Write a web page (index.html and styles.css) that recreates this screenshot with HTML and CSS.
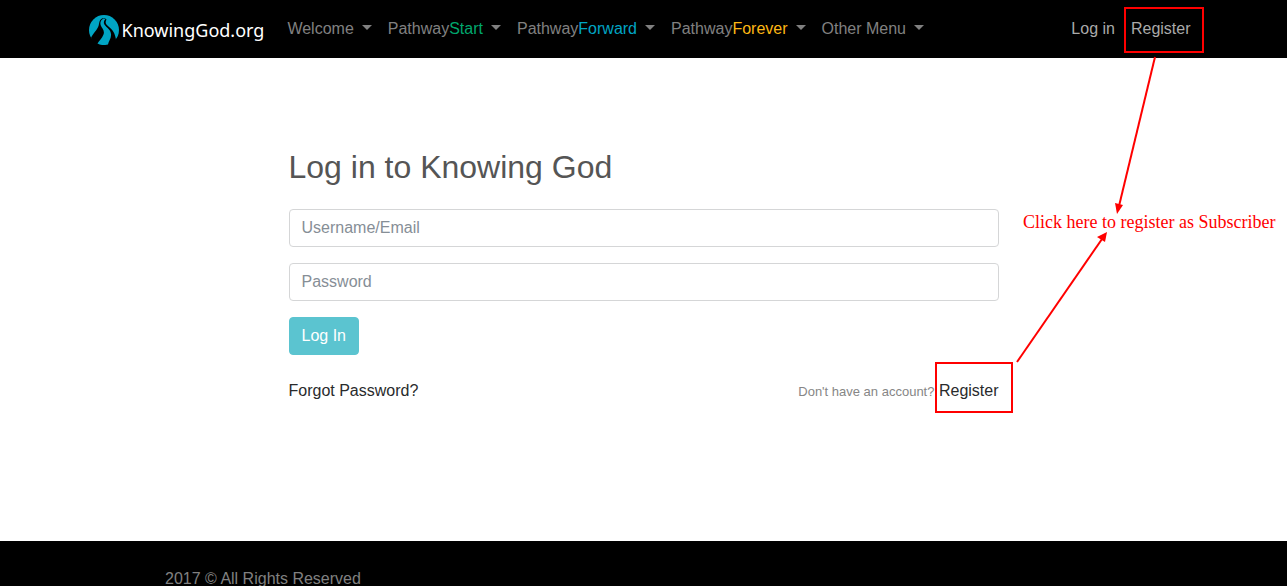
FILE: index.html
```html
<!DOCTYPE html>
<html lang="en">
<head>
  <meta charset="utf-8">
  <meta name="viewport" content="width=device-width, initial-scale=1">
  <title>Log in to Knowing God</title>
  <link rel="stylesheet" href="styles.css">
</head>
<body>
  <header class="site-header">
    <nav class="navbar">
      <a class="brand" href="#">
        <svg class="brand-mark" viewBox="0 0 30 30" aria-hidden="true">
          <circle cx="15" cy="15" r="15" fill="#00a5c4"/>
          <path d="M13 3.500 C10 5 10.500 8 9.500 11 C8 15.500 4 18 2 23 C4 27 7 29 9 30 L20 30 C23 29 25.500 27 27 24.500 C26 18 23.500 14.500 19.500 11.500 C16.500 9 16 7.500 17.500 4.500 C16.500 3.500 15 3 13 3.500 Z" fill="#000"/>
          <path d="M14.500 3.500 C11.500 5 10.800 8 11.800 10.500 C13 13.500 16 15.500 14.500 19.500 C13 23.500 10 25.500 8.500 28.500 C11.500 30.500 16 30.300 19 29.500 C19.500 26 22.500 23.500 22 19 C21.500 13.500 16 12 15 8.500 C14.500 6.500 15.500 5 16.500 4 Z" fill="#00a5c4"/>
        </svg>
        <span class="brand-name">KnowingGod.org</span>
      </a>
      <ul class="menu">
        <li><a class="menu-link has-caret" href="#">Welcome</a></li>
        <li><a class="menu-link has-caret" href="#"><span>Pathway<span class="start">Start</span></span></a></li>
        <li><a class="menu-link has-caret" href="#"><span>Pathway<span class="forward">Forward</span></span></a></li>
        <li><a class="menu-link has-caret" href="#"><span>Pathway<span class="forever">Forever</span></span></a></li>
        <li><a class="menu-link has-caret" href="#">Other Menu</a></li>
      </ul>
      <ul class="menu account">
        <li><a class="menu-link" href="#">Log in</a></li>
        <li><a class="menu-link" href="#">Register</a></li>
      </ul>
    </nav>
  </header>

  <main class="login">
    <h1 class="login-title">Log in to Knowing God</h1>
    <form class="login-form">
      <input class="field" type="text" placeholder="Username/Email" aria-label="Username/Email">
      <input class="field" type="password" placeholder="Password" aria-label="Password">
      <button class="submit" type="submit">Log In</button>
    </form>
    <div class="login-links">
      <a href="#">Forgot Password?</a>
      <p class="signup"><small>Don't have an account?</small> <a href="#">Register</a></p>
    </div>
  </main>

  <footer class="site-footer">
    <p class="copyright">2017 © All Rights Reserved</p>
  </footer>

  <svg class="callouts" width="1287" height="420" viewBox="0 0 1287 420">
    <g fill="none" stroke="#f00" stroke-width="2">
      <rect x="1125" y="8" width="78" height="44"/>
      <rect x="936" y="363" width="76" height="49"/>
      <path d="M1155 57 L1119 206"/>
      <path d="M1017 362 L1102 239"/>
    </g>
    <g fill="#f00">
      <path d="M1117 214 L1115 203 L1123 205 Z"/>
      <path d="M1107 232 L1097 237 L1105 242 Z"/>
    </g>
    <text class="callout-text" x="1023" y="228">Click here to register as Subscriber</text>
  </svg>
</body>
</html>
```
FILE: styles.css
```css
*,
*::before,
*::after {
  box-sizing: border-box;
}

html {
  scrollbar-width: none;
}

body {
  position: relative;
  margin: 0;
  background: #fff;
  color: #555;
  font: 16px/24px "Liberation Sans", Arial, sans-serif;
  overflow-x: hidden;
}

a {
  color: #292b2c;
  text-decoration: none;
}

.site-header {
  background: #000;
}

.navbar {
  display: flex;
  align-items: center;
  max-width: 1140px;
  min-height: 58px;
  margin: 0 auto;
  padding: 0 15px;
}

.brand {
  display: flex;
  align-items: center;
  gap: 3px;
  margin-right: 15px;
  padding-top: 2px;
}

.brand-mark {
  width: 30px;
  height: 30px;
}

.brand-name {
  color: #fff;
  font: 18px/30px "Noto Sans", "Open Sans", sans-serif;
}

.menu {
  display: flex;
  margin: 0;
  padding: 0;
  list-style: none;
}

.account {
  margin-left: auto;
}

.menu-link {
  display: flex;
  align-items: center;
  gap: 8px;
  padding: 8px;
  color: #808080;
}

.account .menu-link {
  color: #aaa;
}

.has-caret::after {
  content: "";
  margin-bottom: 3px;
  border: 5px solid transparent;
  border-top-color: currentColor;
  border-bottom: 0;
}

.start {
  color: #00a76d;
}

.forward {
  color: #00a5c4;
}

.forever {
  color: #fdb714;
}

.login {
  max-width: 740px;
  margin: 0 auto;
  padding: 91px 15px 137px;
}

.login-title {
  margin: 0 0 24px;
  font-size: 32px;
  font-weight: 400;
  line-height: 36px;
}

.login-form {
  display: flex;
  flex-direction: column;
  align-items: flex-start;
  gap: 16px;
}

.field {
  width: 100%;
  height: 38px;
  padding: 6px 12px;
  border: 1px solid #d5d6d7;
  border-radius: 4px;
  background: #fff;
  color: #464a4c;
  font: inherit;
}

.field::placeholder {
  color: #868e96;
  opacity: 1;
}

.submit {
  height: 38px;
  padding: 6px 12px;
  border: 1px solid #5bc4d0;
  border-radius: 4px;
  background: #5bc4d0;
  color: #fff;
  font: inherit;
}

.login-links {
  display: flex;
  justify-content: space-between;
  margin-top: 24px;
}

.signup {
  margin: 0;
}

.signup small {
  color: #868686;
  font-size: 13px;
}

.site-footer {
  padding: 26px 15px 0;
  background: #000;
}

.copyright {
  max-width: 957px;
  margin: 0 auto;
  color: #808080;
}

.callouts {
  position: absolute;
  top: 0;
  left: 50%;
  margin-left: -644px;
  pointer-events: none;
}

.callout-text {
  fill: #f00;
  font: 18px "Liberation Serif", "Times New Roman", serif;
}
```
